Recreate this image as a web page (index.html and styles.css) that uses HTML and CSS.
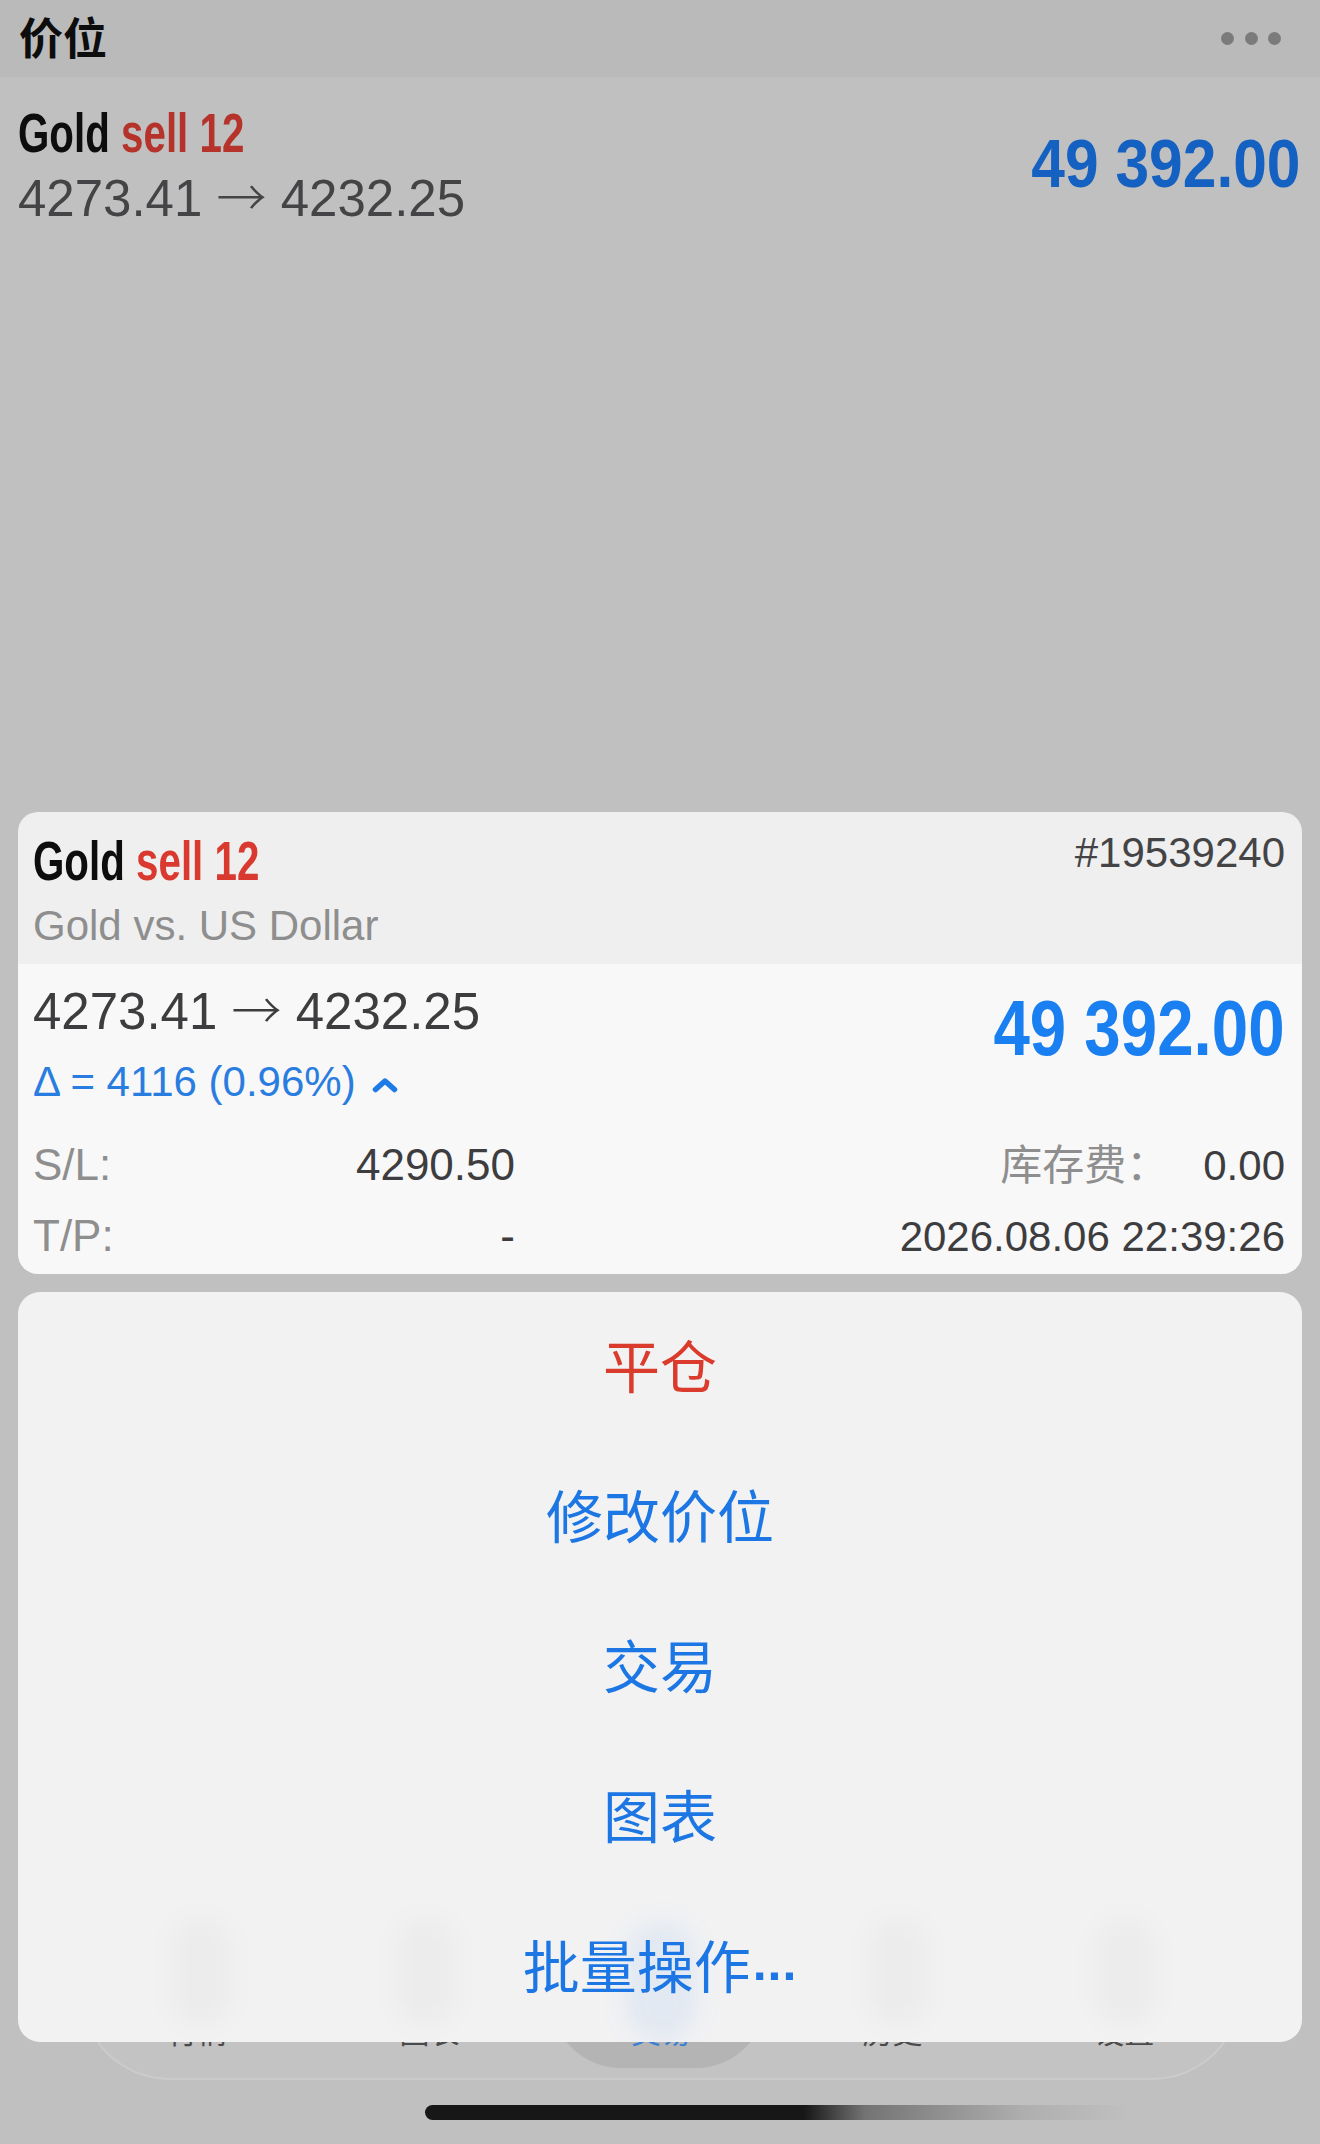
FILE: index.html
```html
<!DOCTYPE html>
<html lang="zh-CN">
<head>
<meta charset="utf-8">
<title>价位</title>
<link rel="stylesheet" href="styles.css">
</head>
<body>
<div class="screen">
  <header class="topbar">
    <h1 class="title">价位</h1>
    <div class="dots"><i></i><i></i><i></i></div>
  </header>

  <section class="list-row">
    <div class="list-left">
      <div class="sym"><span class="sym-inner">Gold <span class="sell">sell 12</span></span></div>
      <div class="prices">4273.41 <span class="arrow">→</span> 4232.25</div>
    </div>
    <div class="profit"><span class="profit-inner">49 392.00</span></div>
  </section>

  <section class="card">
    <div class="card-head">
      <div class="head-top">
        <div class="sym"><span class="sym-inner">Gold <span class="sell card-sell">sell 12</span></span></div>
        <div class="ticket">#19539240</div>
      </div>
      <div class="desc">Gold vs. US Dollar</div>
    </div>
    <div class="card-body">
      <div class="body-top">
        <div class="body-left">
          <div class="prices card-prices">4273.41 <span class="arrow">→</span> 4232.25</div>
          <div class="delta">
            <span>Δ = 4116 (0.96%)</span>
            <svg class="chev" width="26" height="16" viewBox="0 0 26 16"><path d="M3.5 12.5 L13 4 L22.5 12.5" fill="none" stroke="#1e7be6" stroke-width="5.5" stroke-linecap="round" stroke-linejoin="round"/></svg>
          </div>
        </div>
        <div class="card-profit"><span class="card-profit-inner">49 392.00</span></div>
      </div>
      <div class="rows">
        <div class="row">
          <div class="pair-left"><span class="lbl">S/L:</span><span class="val">4290.50</span></div>
          <div class="pair-right"><span class="lbl">库存费：</span><span class="val">0.00</span></div>
        </div>
        <div class="row">
          <div class="pair-left"><span class="lbl">T/P:</span><span class="val">-</span></div>
          <div class="pair-right"><span class="val">2026.08.06 22:39:26</span></div>
        </div>
      </div>
    </div>
  </section>

  <section class="sheet">
    <div class="ghost g1"></div>
    <div class="ghost g2"></div>
    <div class="ghost g3"></div>
    <div class="ghost g4"></div>
    <div class="glow"></div>
    <div class="item danger">平仓</div>
    <div class="item">修改价位</div>
    <div class="item">交易</div>
    <div class="item">图表</div>
    <div class="item">批量操作<span class="ell">...</span></div>
  </section>

  <nav class="tabbar">
    <div class="pill"></div>
    <div class="tab"><span>行情</span></div>
    <div class="tab"><span>图表</span></div>
    <div class="tab active"><span>交易</span></div>
    <div class="tab"><span>历史</span></div>
    <div class="tab"><span>设置</span></div>
  </nav>

  <div class="home"></div>
</div>
</body>
</html>
```

FILE: styles.css
```css
html, body {
  margin: 0;
  padding: 0;
  background: #c0c0c0;
}

body {
  font-family: "Liberation Sans", "Noto Sans CJK SC", sans-serif;
}

.screen {
  position: relative;
  width: 1320px;
  height: 2144px;
  overflow: hidden;
  background: #c0c0c0;
}

/* top bar */
.topbar {
  height: 77px;
  box-sizing: border-box;
  padding: 0 39px 0 19px;
  background: #bababa;
  display: flex;
  align-items: center;
  justify-content: space-between;
}

.title {
  margin: 0 0 6px 0;
  font-family: "Noto Sans CJK SC", sans-serif;
  font-weight: 700;
  font-size: 44px;
  line-height: 44px;
  color: #0d0d0d;
}

.dots {
  display: flex;
  gap: 10.5px;
}

.dots i {
  display: block;
  width: 13px;
  height: 13px;
  border-radius: 50%;
  background: #7b7b7b;
}

/* list row behind overlay */
.list-row {
  margin-top: 26px;
  padding: 0 19px 0 18px;
  display: flex;
  justify-content: space-between;
  align-items: flex-start;
}

.sym {
  height: 60px;
  font-size: 56px;
  line-height: 60px;
  font-weight: 700;
  white-space: nowrap;
  color: #0d0d0d;
}

.sym-inner {
  display: inline-block;
  transform: scaleX(0.72);
  transform-origin: 0 50%;
}

.sell {
  color: #b5332a;
}

.prices {
  margin-top: 6px;
  height: 60px;
  font-size: 51px;
  line-height: 60px;
  color: #444446;
  white-space: nowrap;
}

.arrow {
  font-family: "Noto Sans CJK SC", sans-serif;
  font-weight: 300;
  font-size: 50px;
  line-height: 1;
}

.profit {
  margin-top: 25px;
  font-size: 68px;
  line-height: 70px;
  font-weight: 700;
  color: #1461c2;
  white-space: nowrap;
}

.profit-inner {
  display: inline-block;
  transform: scaleX(0.89);
  transform-origin: 100% 50%;
}

/* card */
.card {
  margin: 583px 18px 0;
  border-radius: 20px;
  overflow: hidden;
}

.card-head {
  background: #efefef;
  padding: 19px 17px 13px 15px;
}

.head-top {
  display: flex;
  justify-content: space-between;
  align-items: flex-start;
}

.card-sell {
  color: #d9392e;
}

.ticket {
  font-size: 42px;
  line-height: 44px;
  color: #444446;
}

.desc {
  margin-top: 10px;
  font-size: 42px;
  line-height: 50px;
  color: #8e8e8e;
}

.card-body {
  background: #f8f8f8;
  padding: 18px 17px 12px 15px;
}

.body-top {
  display: flex;
  justify-content: space-between;
  align-items: flex-start;
}

.card-prices {
  margin-top: 0;
  color: #3d3d3f;
}

.delta {
  margin-top: 15px;
  font-size: 42px;
  line-height: 50px;
  color: #2a7de0;
  display: flex;
  align-items: center;
  gap: 16px;
  white-space: nowrap;
}

.chev {
  display: block;
  margin-top: 6px;
}

.card-profit {
  margin-top: 6px;
  font-size: 77px;
  line-height: 80px;
  font-weight: 700;
  color: #1a7ff0;
  white-space: nowrap;
}

.card-profit-inner {
  display: inline-block;
  transform: scaleX(0.85);
  transform-origin: 100% 50%;
}

.rows {
  margin-top: 33px;
}

.row {
  display: flex;
  justify-content: space-between;
  align-items: baseline;
  font-size: 42px;
  line-height: 50px;
  white-space: nowrap;
}

.row + .row {
  margin-top: 20px;
}

.pair-left {
  width: 482px;
  display: flex;
  justify-content: space-between;
  font-size: 44px;
}

.pair-right {
  display: flex;
  gap: 35px;
}

.lbl {
  color: #8e8e8e;
}

.val {
  color: #3d3d3f;
}

/* action sheet */
.sheet {
  position: relative;
  z-index: 2;
  margin: 18px 18px 0;
  height: 750px;
  border-radius: 22px;
  background: #f2f2f3;
  overflow: hidden;
}

.item {
  position: relative;
  z-index: 1;
  height: 150px;
  box-sizing: border-box;
  padding-bottom: 8px;
  display: flex;
  align-items: center;
  justify-content: center;
  font-family: "Noto Sans CJK SC", sans-serif;
  font-size: 57px;
  color: #1c76e4;
}

.item.danger {
  color: #da3b2c;
}

.ell {
  font-family: "Liberation Sans", sans-serif;
  font-weight: 700;
  font-size: 50px;
  letter-spacing: 1px;
  margin-left: 2px;
}

.ghost {
  position: absolute;
  top: 625px;
  width: 62px;
  height: 110px;
  border-radius: 30px;
  background: rgba(0, 0, 0, 0.025);
  filter: blur(12px);
}

.g1 { left: 152px; }
.g2 { left: 377px; }
.g3 { left: 849px; }
.g4 { left: 1076px; }

.glow {
  position: absolute;
  top: 630px;
  left: 608px;
  width: 70px;
  height: 120px;
  border-radius: 36px;
  background: rgba(40, 130, 240, 0.08);
  filter: blur(12px);
}

/* tab bar beneath the sheet */
.tabbar {
  position: absolute;
  z-index: 1;
  left: 80px;
  top: 1880px;
  width: 1162px;
  height: 200px;
  box-sizing: border-box;
  border: 2px solid #cbcbcb;
  border-top: none;
  border-radius: 0 0 90px 90px;
  background: #c3c3c3;
  display: flex;
}

.pill {
  position: absolute;
  left: 469px;
  top: 0;
  width: 215px;
  height: 188px;
  border-radius: 0 0 70px 70px;
  background: #b4b4b4;
}

.tab {
  position: relative;
  flex: 1;
  display: flex;
  align-items: flex-end;
  justify-content: center;
  padding-bottom: 30px;
}

.tab span {
  font-family: "Noto Sans CJK SC", sans-serif;
  font-size: 30px;
  line-height: 36px;
  color: #4a4a4a;
}

.tab.active span {
  color: #3b7fd2;
}

.home {
  position: absolute;
  z-index: 3;
  left: 425px;
  top: 2105px;
  width: 881px;
  height: 15px;
  border-radius: 8px;
  background: linear-gradient(to right, #171717 0%, #171717 43%, rgba(23, 23, 23, 0.45) 50%, rgba(23, 23, 23, 0.1) 68%, rgba(23, 23, 23, 0) 80%);
}
```
